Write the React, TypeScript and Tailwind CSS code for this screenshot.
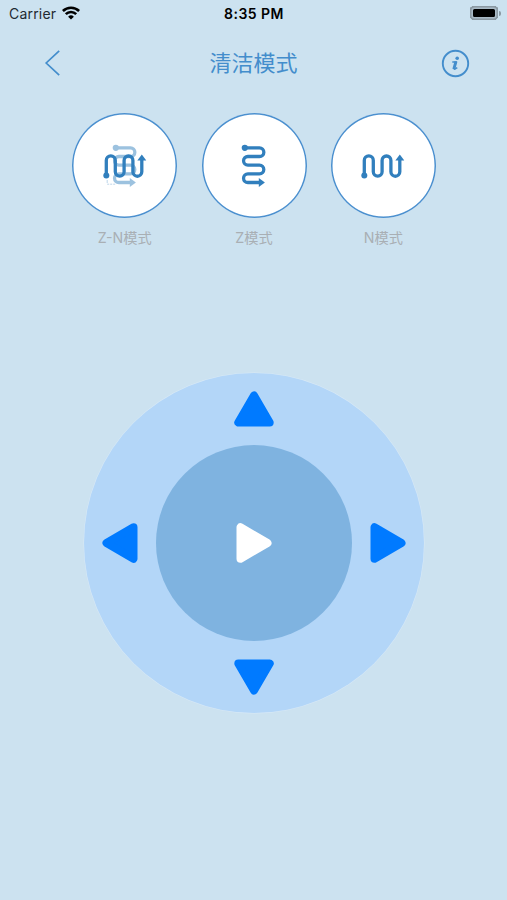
import React from "react";

const N_PATH = "M-18.2 9.5V-5.6a4.5 4.5 0 0 1 9 0V5.8a4.4 4.4 0 0 0 8.8 0V-5.6a4.4 4.4 0 0 1 8.8 0V5.8a4.45 4.45 0 0 0 8.9 0V-6";
const Z_PATH = "M-8.5-18.2H6a4.35 4.35 0 0 1 0 8.7H-5.6a4.35 4.35 0 0 0 0 8.7H6a4.3 4.3 0 0 1 0 8.6H-5.6a4.35 4.35 0 0 0 0 8.7H6";

function ZRoute() {
  return (
    <g>
      <path d={Z_PATH} fill="none" stroke="currentColor" strokeWidth="3.3" />
      <circle cx="-8.7" cy="-18.2" r="3.1" fill="currentColor" />
      <path d="M5.3 12 11.4 16.5 5.3 21Z" fill="currentColor" />
    </g>
  );
}

function NRoute() {
  return (
    <g>
      <path d={N_PATH} fill="none" stroke="currentColor" strokeWidth="3.3" />
      <circle cx="-18.2" cy="9.4" r="3" fill="currentColor" />
      <path d="M12.8-5.4 17.3-11.6 21.8-5.4Z" fill="currentColor" />
    </g>
  );
}

function Mode({ label, children }: { label: string; children: React.ReactNode }) {
  return (
    <button className="flex w-[105px] flex-col items-center">
      <span className="flex size-[105px] items-center justify-center rounded-full bg-white shadow-[inset_0_0_0_1.5px_#4b90cf]">
        <svg className="size-11 -translate-x-[0.5px] text-[#317fbd]" viewBox="-22 -22 44 44">
          {children}
        </svg>
      </span>
      <span className="mt-[10px] text-[14.2px] leading-5 whitespace-nowrap text-[#a9afb4]">{label}</span>
    </button>
  );
}

function Triangle({ className }: { className: string }) {
  return (
    <svg className={`h-10 w-9 ${className}`} viewBox="-18 -20 36 40">
      <path
        d="M-13.5-15.7V15.7L13.5 0Z"
        fill="currentColor"
        stroke="currentColor"
        strokeWidth="8"
        strokeLinejoin="round"
      />
    </svg>
  );
}

export default function App() {
  return (
    <main className="h-[900px] w-[507px] overflow-hidden bg-[#cce2f0] font-['Inter','Noto_Sans_CJK_SC',sans-serif]">
      <div className="grid h-7 grid-cols-3 items-center pr-[6px] pl-[9px] text-black">
        <div className="flex items-center gap-[6px]">
          <span className="text-[14px] leading-5 tracking-[0.2px] text-[#1f2a33]">Carrier</span>
          <svg className="h-[14px] w-[18px] -translate-y-px" viewBox="0 0 18 14" fill="none" stroke="currentColor" strokeWidth="2.6">
            <path d="M.9 5a11.6 11.6 0 0 1 16.2 0" />
            <path d="M3.8 8.1a7.4 7.4 0 0 1 10.4 0" />
            <path d="M9 13.6 6.1 10.7a4.1 4.1 0 0 1 5.8 0Z" fill="currentColor" stroke="none" />
          </svg>
        </div>
        <span className="-translate-x-px text-center text-[14px] leading-5 font-semibold tracking-[0.45px]">8:35 PM</span>
        <div className="flex -translate-y-px items-center justify-end gap-px">
          <div className="h-[14px] w-[28px] rounded-[4.5px] bg-black shadow-[inset_0_0_0_1.5px_#8b99a3,inset_0_0_0_3px_#a9bac6]" />
          <div className="h-[5px] w-[2px] rounded-r-full bg-[#8b99a3]" />
        </div>
      </div>

      <header className="flex h-[70px] items-center justify-between pr-[37px] pl-[44px] text-[#438dcc]">
        <svg className="h-[26px] w-[28px]" viewBox="0 0 28 26" fill="none" stroke="currentColor" strokeWidth="1.7">
          <path d="M15.2.9 2.2 13 15.2 25.1" />
        </svg>
        <h1 className="-translate-x-[3px] text-[22px] leading-8">清洁模式</h1>
        <svg className="size-[29px]" viewBox="0 0 29 29" fill="none" stroke="currentColor">
          <circle cx="14.5" cy="14.5" r="12.7" strokeWidth="1.9" />
          <circle cx="16.2" cy="9.2" r="1.8" fill="currentColor" stroke="none" />
          <path d="M11.3 13.1h3.8l-1.9 6.3q-.2 1 .7.7l2.4-1.5" strokeWidth="1.5" />
          <path d="m15 12.4-2.2 7.8" strokeWidth="2.9" />
        </svg>
      </header>

      <section className="mt-[15px] flex justify-center gap-[24.3px] pl-px">
        <Mode label="Z-N模式">
          <g opacity=".48">
            <ZRoute />
          </g>
          <g stroke="currentColor" strokeWidth=".8" opacity=".4">
            <path d="M-17.3 14v3" />
            <path d="M-17.3 18.2h8" strokeDasharray="2 1" />
          </g>
          <NRoute />
        </Mode>
        <Mode label="Z模式">
          <ZRoute />
        </Mode>
        <Mode label="N模式">
          <NRoute />
        </Mode>
      </section>

      <section className="mt-[124.5px] flex justify-center pl-px">
        <div className="grid size-[340px] grid-cols-[72px_196px_72px] grid-rows-[72px_196px_72px] place-items-center rounded-full bg-[#b3d6f8] shadow-[0_0_0_0.5px_#d8e9f7]">
          <button className="col-start-2 text-[#007aff]">
            <Triangle className="-rotate-90" />
          </button>
          <button className="col-start-1 row-start-2 text-[#007aff]">
            <Triangle className="rotate-180" />
          </button>
          <button className="col-start-2 row-start-2 flex size-[196px] items-center justify-center rounded-full bg-[#7fb3e0] text-white">
            <Triangle className="" />
          </button>
          <button className="col-start-3 row-start-2 text-[#007aff]">
            <Triangle className="" />
          </button>
          <button className="col-start-2 row-start-3 text-[#007aff]">
            <Triangle className="rotate-90" />
          </button>
        </div>
      </section>
    </main>
  );
}
